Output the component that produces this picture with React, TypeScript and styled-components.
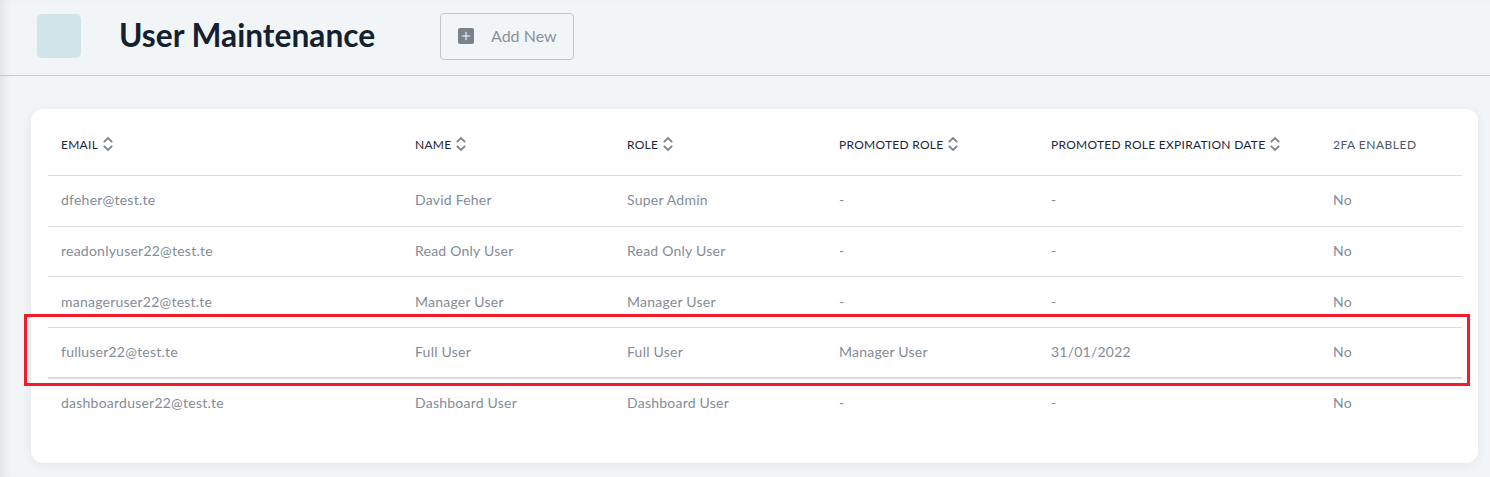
import styled, { createGlobalStyle } from 'styled-components';

const GlobalStyle = createGlobalStyle`
  html, body {
    margin: 0;
    padding: 0;
    background: #f1f5f8;
  }
`;

const Page = styled.div`
  position: relative;
  height: 477px;
  overflow: hidden;
  background: #f1f5f8;
  font-family: 'Lato', 'Open Sans', sans-serif;
  box-shadow: inset 8px 0 8px -5px rgba(40, 50, 60, 0.1);
`;

const Header = styled.header`
  display: flex;
  align-items: center;
  box-sizing: border-box;
  height: 76px;
  padding: 0 0 3px 37px;
  border-bottom: 1px solid #c4c9cd;
`;

const LogoTile = styled.div`
  width: 44px;
  height: 44px;
  border-radius: 5px;
  background: #d1e4ea;
`;

const Title = styled.h1`
  margin: 0 0 3px 38px;
  width: 321px;
  font-size: 31.7px;
  font-weight: 700;
  white-space: nowrap;
  color: #14202e;
`;

const AddButton = styled.button`
  display: flex;
  align-items: center;
  gap: 17px;
  box-sizing: border-box;
  width: 134px;
  height: 47px;
  padding: 0 0 0 17px;
  border: 1px solid #c2c7cc;
  border-radius: 4px;
  background: transparent;
  font-family: inherit;
  font-size: 16px;
  color: #8a929c;
`;

const AddLabel = styled.span`
  padding-bottom: 2px;
`;

const PlusIcon = styled.svg`
  width: 16px;
  height: 16px;
  flex: none;
`;

const Card = styled.section`
  box-sizing: border-box;
  width: 1447px;
  height: 354px;
  margin: 33px 0 0 31px;
  padding: 6px 16px 0 17px;
  border-radius: 12px;
  background: #fff;
  box-shadow: 0 2px 10px rgba(40, 50, 60, 0.07);
`;

const Row = styled.div<{ $head?: boolean; $thick?: boolean }>`
  display: grid;
  grid-template-columns: 354px 212px 212px 212px 282px 132px;
  align-items: center;
  box-sizing: border-box;
  height: ${({ $head }) => ($head ? '61px' : '50.7px')};
  border-bottom: ${({ $thick }) => ($thick ? '2px' : '1px')} solid #dcdcdc;

  &:last-child {
    border-bottom-color: transparent;
  }
`;

const HeadCell = styled.div<{ $muted?: boolean }>`
  display: flex;
  align-items: center;
  gap: 3.5px;
  padding: 0 0 2px 13px;
  font-size: 12px;
  letter-spacing: ${({ $muted }) => ($muted ? '0.5px' : '0.27px')};
  white-space: nowrap;
  color: ${({ $muted }) => ($muted ? '#4e5763' : '#1b2738')};
`;

const SortIcon = styled.svg`
  width: 12px;
  height: 16px;
  flex: none;
`;

const Cell = styled.div`
  padding: 0 0 2px 13px;
  font-size: 14px;
  letter-spacing: 0.23px;
  white-space: nowrap;
  color: #848c98;
`;

const Highlight = styled.div`
  position: absolute;
  left: 24px;
  top: 314px;
  width: 1446px;
  height: 72px;
  box-sizing: border-box;
  border: 3px solid #f21b2a;
  pointer-events: none;
`;

const columns = [
  { label: 'EMAIL', sortable: true },
  { label: 'NAME', sortable: true },
  { label: 'ROLE', sortable: true },
  { label: 'PROMOTED ROLE', sortable: true },
  { label: 'PROMOTED ROLE EXPIRATION DATE', sortable: true },
  { label: '2FA ENABLED', sortable: false },
];

const users = [
  ['dfeher@test.te', 'David Feher', 'Super Admin', '-', '-', 'No'],
  ['readonlyuser22@test.te', 'Read Only User', 'Read Only User', '-', '-', 'No'],
  ['manageruser22@test.te', 'Manager User', 'Manager User', '-', '-', 'No'],
  ['fulluser22@test.te', 'Full User', 'Full User', 'Manager User', '31/01/2022', 'No'],
  ['dashboarduser22@test.te', 'Dashboard User', 'Dashboard User', '-', '-', 'No'],
];

function Sort() {
  return (
    <SortIcon viewBox="0 0 12 16" fill="none" stroke="#7a8590" strokeWidth="1.8">
      <path d="M1.8 6.2 L6 2 L10.2 6.2" />
      <path d="M1.8 9.8 L6 14 L10.2 9.8" />
    </SortIcon>
  );
}

export default function App() {
  return (
    <Page>
      <GlobalStyle />
      <Header>
        <LogoTile />
        <Title>User Maintenance</Title>
        <AddButton>
          <PlusIcon viewBox="0 0 16 16">
            <rect width="16" height="16" rx="2" fill="#79838e" />
            <path d="M8 3.8 V12.2 M3.8 8 H12.2" stroke="#fff" strokeWidth="1" />
          </PlusIcon>
          <AddLabel>Add New</AddLabel>
        </AddButton>
      </Header>
      <Card>
        <Row $head>
          {columns.map((col) => (
            <HeadCell key={col.label} $muted={!col.sortable}>
              {col.label}
              {col.sortable && <Sort />}
            </HeadCell>
          ))}
        </Row>
        {users.map((user, i) => (
          <Row key={user[0]} $thick={i === 3}>
            {user.map((value, j) => (
              <Cell key={j}>{value}</Cell>
            ))}
          </Row>
        ))}
      </Card>
      <Highlight />
    </Page>
  );
}
